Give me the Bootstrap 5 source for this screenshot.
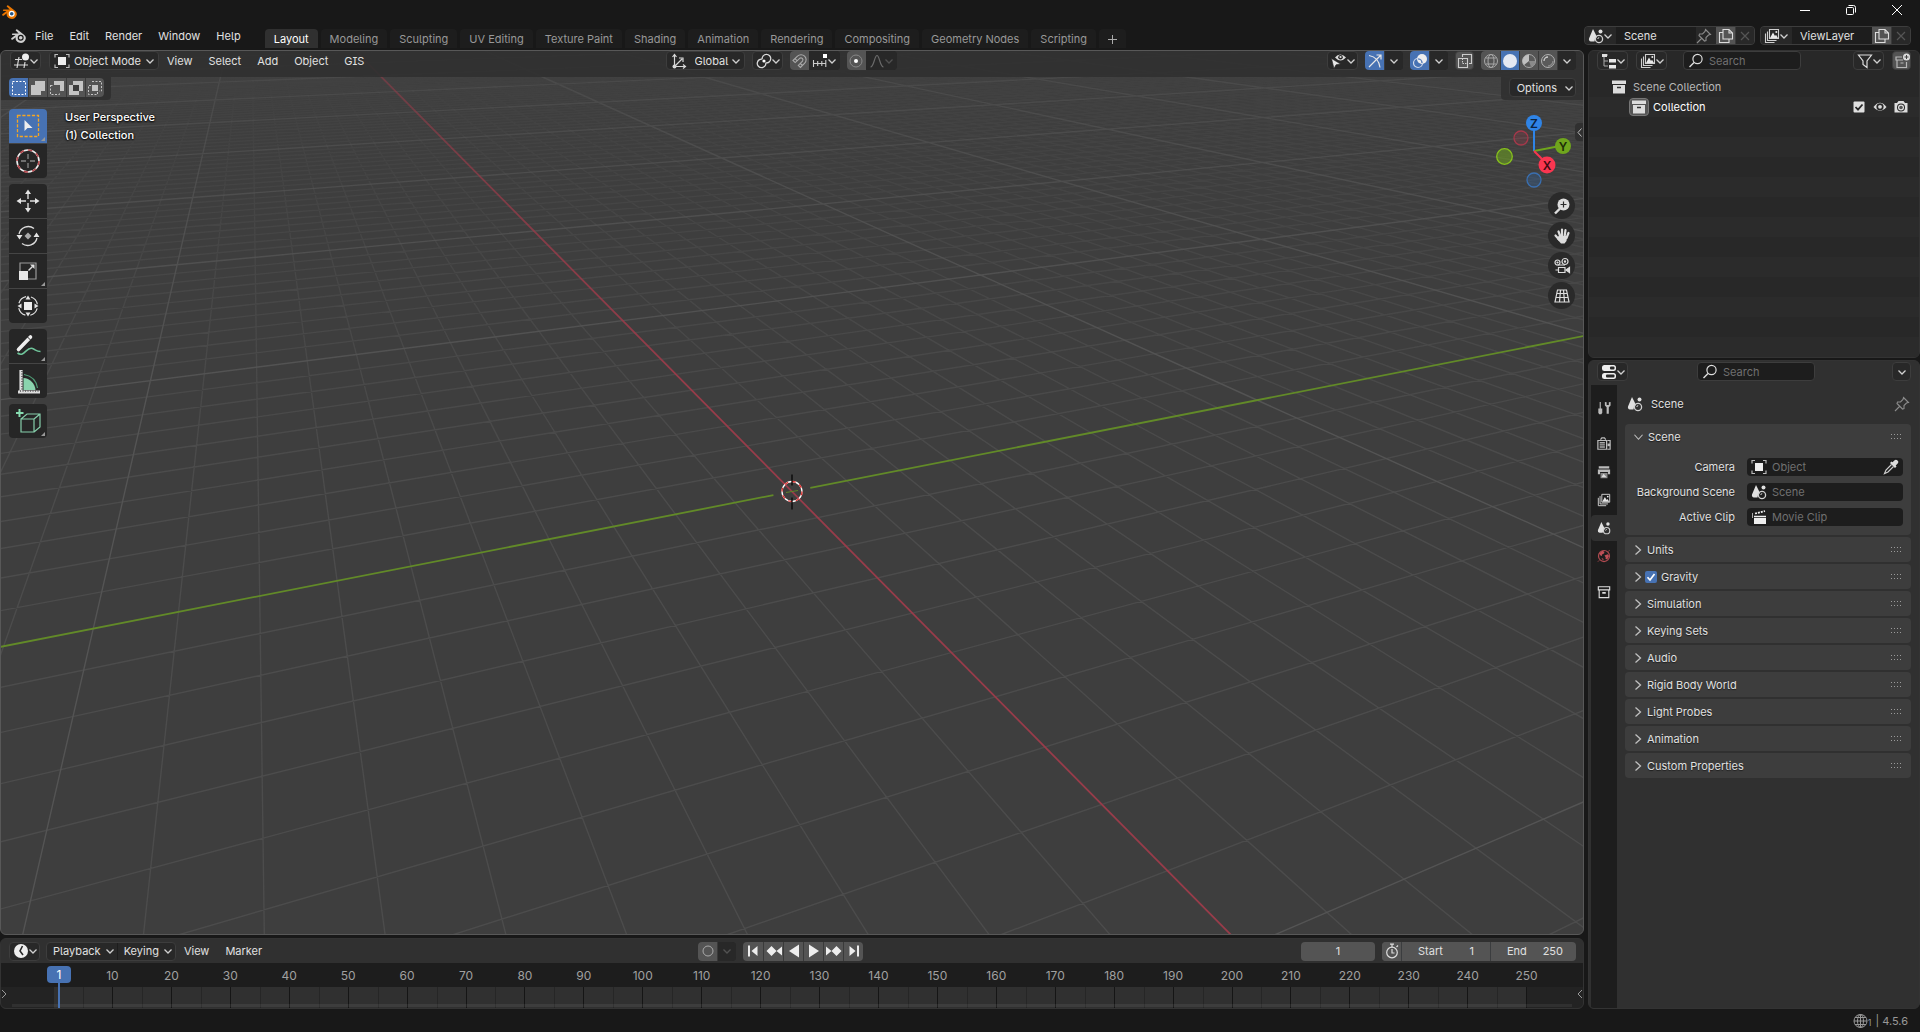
<!DOCTYPE html>
<html lang="en">
<head>
<meta charset="utf-8">
<meta name="viewport" content="width=device-width, initial-scale=1">
<title>Blender</title>
<link href="https://cdn.jsdelivr.net/npm/bootstrap@5.3.0/dist/css/bootstrap.min.css" rel="stylesheet">
<style>
:root{--ink:#e0e0e0;--dim:#989898;--blue:#4772b3;--btn:#545454;--menu:#282828;--line:#3d3d3d}
body{font:11px/18px Inter,"Liberation Sans",sans-serif;font-feature-settings:"cv05","cv08";background:#181818;color:var(--ink);overflow:hidden}
button,input,select{font:inherit;color:inherit;font-feature-settings:inherit}
button{border:0;padding:0;background:none}
.ic{width:16px;height:16px;flex:none;display:block;overflow:visible}
.chev{width:8px;height:8px;flex:none;overflow:visible;pointer-events:none}
.shade{text-shadow:0 1px 1px #0008}
.g5{gap:5px}
.g7{gap:7px}
.titlebar{height:24px}
.titlebar .winbtn{width:46px;height:20px;display:flex;align-items:center;justify-content:center}
.topbar{height:26px;padding-bottom:2px}
.mainmenu{padding:3px 0 0 3px}
.menubtn{padding:0 8px}
.wstabs{gap:3px;padding-left:16px}
.wstab{height:19px;padding:0 9px;color:var(--dim);background:#1d1d1d;border-radius:4px 4px 0 0}
.wstab.active{background:#303030;color:#fff}
.idblocks{padding:2px 9px 0 0;gap:5px}
.ctl{height:19px;display:flex;align-items:center;background:var(--menu);border:1px solid var(--line);border-radius:4px;overflow:hidden}
.ctl.seg{border:0}
.ctl select{appearance:none;background:none;border:0;outline:0;padding:0}
.sq{width:19px;height:100%;display:flex;align-items:center;justify-content:center;background:var(--btn)}
.ctl.sq{height:19px}
.sq.dark{background:var(--menu)}
.sq.on{background:var(--blue)}
.sq+.sq{border-left:1px solid #3a3a3a}
.typebtn{width:31px;padding:0 4px 0 3px;justify-content:space-between}
.modesel{width:72px}
.orientsel{width:37px}
.optbtn{padding:0 2px 0 7px}
.idname{background:#1d1d1d;border:0;outline:0;height:100%;min-width:0;width:80px}
.main{min-height:0}
.side{width:332px;flex:none}
.area{border:1px solid #333;border-radius:6px;overflow:hidden;min-height:0}
.view3d{border-color:#585858;background:#3e3e3e;position:relative}
.floor{position:absolute;inset:0;width:100%;height:100%}
.vhead{height:26px;padding:0 7px 0 9px;background:#303030e6;position:relative}
.vrow{position:relative}
.vtab{background:#303030e6;height:23px;padding:1px 7px 1px 8px}
.hgroup{flex:1 1 0}
.tools{position:relative;padding:9px 0 0 8px}
.tgroup{width:38px;border-radius:4px;overflow:hidden;background:#454545}
.tool{width:38px;height:34px;background:#262626;display:flex;align-items:center;justify-content:center;position:relative}
.tool.on{background:var(--blue)}
.tool.more::after{content:"";position:absolute;right:2px;bottom:2px;border:2px solid transparent;border-right-color:#999;border-bottom-color:#999}
.ovtext{padding:0 0 0 18px;margin-top:-1px;color:#fff;font-weight:500;text-shadow:0 0 2px #000,0 1px 2px #000}
.gizmo{position:absolute;right:0;top:58px;width:92px;height:84px}
.navs{position:absolute;right:8px;top:141px;gap:3px}
.navs button{width:27px;height:27px;border-radius:50%;background:#2a2a2a;display:flex;align-items:center;justify-content:center}
.sidetoggle{position:absolute;right:0;top:72px;width:8px;height:18px;background:#303030;border-radius:4px 0 0 4px}
.phead{height:25px;padding:0 8px}
.searchbox{width:118px;height:19px;background:#1d1d1d;border:1px solid var(--line);border-radius:4px;padding:0 4px;gap:5px}
.searchbox input,.field input{background:none;border:0;outline:0;min-width:0;padding:0;flex:1}
.searchbox input::placeholder,.field input::placeholder{color:#707070;opacity:1}
.outliner{height:308px;background:#282828;flex:none}
.tree{flex:1;margin-top:1px;background:repeating-linear-gradient(#282828 0 20px,#2b2b2b 20px 40px)}
.trow{height:20px;padding:0 10px 0 22px;gap:6px}
.trow.child{padding-left:40px;gap:4px}
.colbox{width:20px;height:18px;border-radius:4px;background:#555;border:1px solid #777;display:flex;align-items:center;justify-content:center}
.props{flex:1;background:#303030}
.props .phead{height:24px;padding-top:1px}
.ptabs{width:26px;background:#1d1d1d;margin-left:2px;padding-top:10px}
.ptabs .ic{width:14px;height:14px}
.ptabs button{height:26px;width:26px;margin-bottom:2px;display:flex;align-items:center;justify-content:center;border-radius:4px 0 0 4px}
.ptabs button.on{background:#303030}
.ptabs .sep{margin-bottom:10px}
.pbody{padding:10px 8px 0 8px}
.crumb{padding:0 1px 11px 2px;gap:8px}
.pnl{background:#3d3d3d;border-radius:4px;margin-bottom:2px}
.pnl.open{height:111px}
.phd{height:25px;padding:0 9px;width:100%;gap:5px}
.tickwrap{margin:0 -1px 0 -2px}
.tickbox{appearance:none;width:12px;height:12px;background:var(--blue);border-radius:2px;margin:0}
.fields{padding-top:5px}
.field{width:156px;height:18px;background:#1d1d1d;border-radius:4px;padding:0 4px;gap:5px}
.fieldrow{height:25px;padding-right:8px}
.timeline{height:71px;flex:none;background:#303030;position:relative}
.thead{height:24px;padding:0 7px 0 8px}
.ruler{height:24px;background:#1d1d1d;color:#a0a0a0;padding:2px 27px 0 82px;font-size:12px}
.ruler span,.track span{flex:1 1 0;text-align:center;width:0}
.track{height:22px;padding:0 27px 0 82px;background:linear-gradient(90deg,#232323 53px,#303030 53px calc(100% - 57px),#232323 0);position:relative}
.track span{border-left:1px solid #262626;background:linear-gradient(90deg,transparent calc(50% - 1px),#151515 0 50%,transparent 0)}
.track::after{content:"";position:absolute;left:11px;right:11px;bottom:2px;height:3px;background:#ffffff10}
.playhead{position:absolute;left:46px;top:27px;width:24px;height:17px;border-radius:4px;background:var(--blue);color:#fff;text-align:center;z-index:2;font-size:12px;line-height:17px}
.playhead::after{content:"";position:absolute;left:11px;top:17px;width:2px;height:25px;background:var(--blue)}
.popbtn{padding:0 3px 0 6px;display:flex;align-items:center;gap:5px}
.popbtn+.popbtn{border-left:1px solid #1d1d1d}
.num{height:19px;background:var(--btn);border:0;outline:0;border-radius:4px}
.numcur{width:74px}
.numst{width:89px}
.numend{width:86px;padding-right:13px}
.play{display:flex;height:19px;border-radius:4px;overflow:hidden}
.play .sq{width:20px}
.statusbar{height:23px;color:#989898;padding-right:12px}
.substat{font-size:9px;margin-left:-1px}
.num-in{background:none;border:0;outline:0;padding:0;text-align:right;width:24px}
.edgearrow{position:absolute;bottom:9px;width:6px;height:10px;overflow:visible}
</style>
</head>
<body class="d-flex flex-column vh-100">
<svg class="d-none" xmlns="http://www.w3.org/2000/svg">
<defs>
<symbol id="chev" viewBox="0 0 8 8"><path d="M0.5 2.5 4 6 7.5 2.5" fill="none" stroke="#d0d0d0" stroke-width="1.3"/></symbol>
<symbol id="editor3d" viewBox="0 0 16 16"><g fill="none" stroke="#d8d8d8" stroke-width="1.2"><path d="M1 6.5h7M0 12h14M5 4 3 15M11 9 10 15"/></g><circle cx="11.500" cy="4" r="3.500" fill="#eee"/></symbol>
<symbol id="obj" viewBox="0 0 16 16"><rect x="4" y="4" width="8" height="8" fill="#eee"/><path d="M1 4.500V1.500h3M12 1.500h3v3M15 11.500v3h-3M4 14.500H1v-3" fill="none" stroke="#bbb" stroke-width="1.200"/></symbol>
<symbol id="orient" viewBox="0 0 16 16"><path d="M3.500 2v11.500H14M3.500 13.500 11 6M1.500 4l2-2.500 2 2.500M12 11.500l2.500 2-2.500 2M8 5h4v4" fill="none" stroke="#d8d8d8" stroke-width="1.200"/><circle cx="3.500" cy="13.500" r="2" fill="#d8d8d8"/></symbol>
<symbol id="pivot" viewBox="0 0 16 16"><g fill="none" stroke="#d8d8d8" stroke-width="1.300"><path d="M6.500 6.200a4.300 4.300 0 1 0 3.300 3.600M9.500 9.800a4.300 4.300 0 1 0-3.300-3.600"/></g><circle cx="8" cy="8" r="1.600" fill="#fff"/></symbol>
<symbol id="magnet" viewBox="0 0 16 16"><path d="M2 7.500 6.500 3.200a5 5 0 0 1 7.200 7L9.500 14.500 7.300 12.400l4.200-4.300a2 2 0 0 0-2.800-2.800L4.200 9.600ZM4 5.700l2.100 2M9.300 10.500l2.100 2" fill="none" stroke="#aaa" stroke-width="1.100"/></symbol>
<symbol id="snapinc" viewBox="0 0 16 16"><path d="M1 10.500h13M1.500 7v7M5.700 8v5M9.800 8v5M13.800 7v7" fill="none" stroke="#ccc" stroke-width="1.100"/><rect x="11" y="1" width="4" height="4" fill="#fff"/></symbol>
<symbol id="propedit" viewBox="0 0 16 16"><circle cx="8" cy="8" r="6" fill="none" stroke="#888"/><circle cx="8" cy="8" r="2" fill="#fff"/></symbol>
<symbol id="falloff" viewBox="0 0 16 16"><path d="M1.500 14C5 14 5.500 2.500 8 2.500S11 14 14.500 14" fill="none" stroke="#6a6a6a" stroke-width="1.200"/></symbol>
<symbol id="visib" viewBox="0 0 16 16"><path d="M4 4.500Q9 -1.500 15 4.500Q9.500 10.500 4 4.500Z" fill="#ddd"/><circle cx="9.500" cy="4.300" r="2.300" fill="#282828"/><circle cx="9.500" cy="4" r="1.100" fill="#ddd"/><path d="M0.500 5.500l9 5.500-4.500.8-2 3.700Z" fill="#e8e8e8" stroke="#282828" stroke-width=".6"/></symbol>
<symbol id="giz" viewBox="0 0 16 16"><path d="M2 2.500c6 1 10 5 11 12M2 14 13.500 2.500M9.500 2h4.500v4.500" fill="none" stroke="#e8e8e8" stroke-width="1.200"/></symbol>
<symbol id="overlay" viewBox="0 0 16 16"><circle cx="10" cy="6" r="5" fill="#eee"/><circle cx="6" cy="10" r="4.500" fill="none" stroke="#cfd8ea" stroke-width="1.200"/><path d="M6 6a4 4 0 0 1 4 4" stroke="#4772b3" fill="none" stroke-width="1.200"/></symbol>
<symbol id="xray" viewBox="0 0 16 16"><path d="M5.500 4V1.500h9v9H12M1.500 5.500h9v9h-9Z" fill="none" stroke="#ccc" stroke-width="1.100"/><path d="M5.500 5.500v5h5" fill="none" stroke="#ccc" stroke-dasharray="1.500 1"/></symbol>
<symbol id="wire" viewBox="0 0 16 16"><g fill="none" stroke="#a8a8a8"><circle cx="8" cy="8" r="6.500"/><ellipse cx="8" cy="8" rx="3" ry="6.500"/><path d="M2.500 5h11M2.500 11h11"/></g></symbol>
<symbol id="solid" viewBox="0 0 16 16"><circle cx="8" cy="8" r="7" fill="#e4e8f2"/></symbol>
<symbol id="matp" viewBox="0 0 16 16"><circle cx="8" cy="8" r="6.500" fill="#5a5a5a" stroke="#a8a8a8"/><path d="M8 1.500V8L3 12A6.500 6.500 0 0 1 8 1.500" fill="#c0c0c0"/><path d="M8 8h6.500A6.500 6.500 0 0 1 10 14Z" fill="#8a8a8a"/></symbol>
<symbol id="rend" viewBox="0 0 16 16"><circle cx="8" cy="8" r="6.500" fill="#5a5a5a" stroke="#b0b0b0"/><path d="M4 8a4 4 0 0 1 4-4" fill="none" stroke="#ccc" stroke-width="1.300"/><path d="M13 8a5 5 0 0 1-5 5" fill="none" stroke="#888" stroke-width="1.500"/></symbol>
<symbol id="scene" viewBox="0 0 16 16"><path d="M5 1 9 9a5 5 0 0 0-2.500 4.500H3A2.500 2.500 0 0 1 1 10.500Z" fill="#e0e0e0"/><circle cx="11" cy="11" r="3.600" fill="none" stroke="#d0d0d0" stroke-width="1.300"/><path d="M9.800 11a1.400 1.400 0 0 1 1.400-1.400" fill="none" stroke="#d0d0d0"/><circle cx="12.500" cy="3.500" r="2" fill="#e0e0e0"/></symbol>
<symbol id="layers" viewBox="0 0 16 16"><path d="M5.500 1.500h9v9h-9ZM3.500 3.500v9h9M1.500 5.500v9h9" fill="none" stroke="#d0d0d0" stroke-width="1.100"/><path d="M6 10l3-5.500 2 3.500 1-1.200 2 3.200Z" fill="#e8e8e8"/><circle cx="12.300" cy="4" r="1" fill="#e8e8e8"/></symbol>
<symbol id="copy" viewBox="0 0 16 16"><path d="M5 1.500h6l3.500 3.500v6H5ZM11 1.500V5h3.500M5 4.500H1.500v10H11V11.500" fill="none" stroke="#ddd" stroke-width="1.100"/></symbol>
<symbol id="xx" viewBox="0 0 16 16"><path d="M4 4l8 8M12 4l-8 8" stroke="#555" stroke-width="1.200"/></symbol>
<symbol id="pin" viewBox="0 0 16 16"><path d="M9.500 1.500 14.500 6.500 12.500 7 10 9.500 10 12.500 8.500 13 3 7.500 3.500 6h3L9 3.500ZM5.500 10.500 1 15" fill="none" stroke="#8a8a8a" stroke-width="1.100"/></symbol>
<symbol id="outl" viewBox="0 0 16 16"><path d="M1 2h6M3 3v10h4M3 8h4" fill="none" stroke="#aaa"/><rect x="1" y="1" width="5" height="3" fill="#ddd"/><rect x="8" y="6" width="7" height="3.500" fill="#e8e8e8"/><rect x="8" y="12" width="7" height="3.500" fill="#e8e8e8"/></symbol>
<symbol id="mag" viewBox="0 0 16 16"><circle cx="9.500" cy="6" r="4.600" fill="none" stroke="#ddd" stroke-width="1.200"/><path d="M6 9.500 1.500 14" stroke="#ddd" stroke-width="1.400"/></symbol>
<symbol id="filt" viewBox="0 0 16 16"><path d="M1.500 2h13L10 8v6.500l-4-3V8Z" fill="none" stroke="#ddd" stroke-width="1.200"/></symbol>
<symbol id="newcol" viewBox="0 0 16 16"><path d="M8 4H2v3h7M3 7v7.500h9.500V9M6.500 10h3" fill="none" stroke="#b8b8b8" stroke-width="1.200"/><circle cx="12.500" cy="4" r="3.500" fill="#ddd"/><path d="M12.500 2v4M10.500 4h4" stroke="#444"/></symbol>
<symbol id="coll" viewBox="0 0 16 16"><path d="M1 1.500h14v3.500H1ZM2 6h12v8.500H2Z" fill="#dcdcdc"/><path d="M6 8.500h4" stroke="#333" stroke-width="1.600"/></symbol>
<symbol id="colo" viewBox="0 0 16 16"><path d="M1.500 2h13v3.500h-13ZM2.500 5.500v9h11v-9" fill="none" stroke="#ddd" stroke-width="1.300"/><path d="M6 9h4" stroke="#ddd" stroke-width="2"/></symbol>
<symbol id="check" viewBox="0 0 16 16"><rect x="2.500" y="2.500" width="11" height="11" rx="1" fill="#e0e0e0"/><path d="M4.500 8l2.500 2.700L11.500 5.500" fill="none" stroke="#282828" stroke-width="1.800"/></symbol>
<symbol id="eye" viewBox="0 0 16 16"><path d="M1.500 8Q8 -.5 14.500 8Q8 15.500 1.500 8Z" fill="#dcdcdc"/><circle cx="8" cy="7.800" r="3.600" fill="#282828"/><circle cx="8" cy="7.800" r="1.900" fill="#dcdcdc"/></symbol>
<symbol id="cam" viewBox="0 0 16 16"><path d="M1.500 4h2.500l1.500-2h5L12 4h2.500v9.500h-13Z" fill="#dcdcdc"/><circle cx="8" cy="8.500" r="4" fill="#282828"/><circle cx="8" cy="8.500" r="3" fill="#dcdcdc"/><circle cx="8" cy="8.500" r="1.800" fill="#555"/></symbol>
<symbol id="propic" viewBox="0 0 16 16"><rect x="1" y="1" width="14" height="6" rx="2.500" fill="#eee"/><rect x="1" y="9" width="14" height="6" rx="2.500" fill="#eee"/><rect x="9" y="2.500" width="4.500" height="3" rx="1" fill="#282828"/><rect x="5" y="10.500" width="8.500" height="3" rx="1" fill="#282828"/></symbol>
<symbol id="tool" viewBox="0 0 16 16"><path d="M3.700 1v8" stroke="#bbb" stroke-width="1.300"/><path d="M1.500 8.500h4.500v5l-1 1.500H2.500l-1-1.500Z" fill="#bbb"/><path d="M9 1v4l2 2v7.500h2.500V7l2-2V1l-2 .5v3h-2.500v-3Z" fill="#bbb"/></symbol>
<symbol id="rcam" viewBox="0 0 16 16"><path d="M4 3l1.500-2h3L10 3M1 4h10v10H1ZM12 4h3v10h-3" fill="none" stroke="#bbb" stroke-width="1.400"/><path d="M3 6.500h6M3 9h6M3 11.500h6" stroke="#aaa" stroke-width="1.600"/><rect x="12" y="7.500" width="3" height="3" fill="#bbb"/></symbol>
<symbol id="printer" viewBox="0 0 16 16"><path d="M2 1.500h12v2.500H2ZM1 5h14v5.500h-2.500V8h-9v2.500H1Z" fill="#bbb"/><path d="M4 9h8v6H4Z" fill="#888"/><path d="M5 14l2.500-4 3.500 4Z" fill="#ddd"/></symbol>
<symbol id="world" viewBox="0 0 16 16"><circle cx="8" cy="8" r="6.300" fill="none" stroke="#b04a50" stroke-width="1.400"/><path d="M2.500 5l3.500-3 2.500 1-.5 2-2 1-.5 2-1.500-.5ZM8.500 7.500l4-1.500 1.200 2-2 4-2-1 .2-1.500ZM5 10l2.500 1.500-.5 2Z" fill="#c05058"/><path d="M1 14.500l1.500-1.500M13 2.500l1.500-1" stroke="#b04a50"/></symbol>
<symbol id="clip" viewBox="0 0 16 16"><rect x="3" y="9" width="12" height="6" fill="#eee"/><path d="M3 7.500h12" stroke="#eee" stroke-width="1.500"/><path d="M4 4.500 14 2" stroke="#eee" stroke-width="1.800" stroke-dasharray="2 1"/><path d="M1.500 4v5" stroke="#aaa"/></symbol>
<symbol id="drop" viewBox="0 0 16 16"><path d="M14.500 1.500a2.200 2.200 0 0 0-3.200 0L9.500 3.300 8.500 2.500 7 4l5 5 1.500-1.500-.8-1 1.800-1.800a2.200 2.200 0 0 0 0-3.200" fill="#ddd"/><path d="M8.500 5.500 3 11l-1.500 3.500L5 13l5.500-5.500" fill="none" stroke="#ccc" stroke-width="1.200"/></symbol>
<symbol id="right" viewBox="0 0 8 10"><path d="M1.500 0.500 6.500 5l-5 4.500" fill="none" stroke="#c0c0c0" stroke-width="1.300"/></symbol>
<symbol id="down" viewBox="0 0 10 8"><path d="M.5 1.500 5 6.500l4.500-5" fill="none" stroke="#c0c0c0" stroke-width="1.200"/></symbol>
<symbol id="grip" viewBox="0 0 11 5"><path d="M0 .5h11M0 4.500h11" stroke="#9a9a9a" stroke-dasharray="1 2"/></symbol>
<symbol id="blogo" viewBox="0 0 16 14"><path d="M6.300.6 13 5.800a5 4.600 0 1 1-8.200 2.400L1.600 10.700a1 1 0 0 1-1.300-1.400L4.500 6H1.700a.8.800 0 0 1 0-1.600h6L5.200 2.100A.9.900 0 0 1 6.300.6Z" fill="var(--c1)"/><circle cx="9.700" cy="8.700" r="3" fill="var(--c2)"/><circle cx="9.700" cy="8.700" r="1.800" fill="var(--c3)"/></symbol>
<symbol id="tclock" viewBox="0 0 16 16"><circle cx="8" cy="8" r="7" fill="#eee"/><path d="M9.500 3 7 8l3 4" fill="none" stroke="#282828" stroke-width="1.600"/></symbol>
<symbol id="watch" viewBox="0 0 16 16"><circle cx="8" cy="9.500" r="5.300" fill="none" stroke="#ddd" stroke-width="1.200"/><path d="M6 1.200h4M8 1.200v3M8 6v4h2.500M12.500 4l1.500-1.500" fill="none" stroke="#ddd" stroke-width="1.200"/></symbol>
<symbol id="globe" viewBox="0 0 16 16"><g fill="none" stroke="#989898"><circle cx="7.500" cy="8" r="6.500"/><ellipse cx="7.500" cy="8" rx="3" ry="6.500"/><path d="M1 8h13M2 4.500h11M2 11.500h11M7.500 1.500v13"/></g></symbol>
</defs>
</svg>

<header>
  <div class="titlebar d-flex align-items-start justify-content-between">
    <svg class="ic mt-1" style="--c1:#ea7600;--c2:#fff;--c3:#265787;margin-left:2px"><use href="#blogo"/></svg>
    <div class="d-flex">
      <button class="winbtn" aria-label="Minimize"><svg width="10" height="10"><path d="M0 5.500h10" stroke="#fff"/></svg></button>
      <button class="winbtn" aria-label="Restore"><svg width="10" height="10" fill="none" stroke="#fff"><rect x=".5" y="2.500" width="7" height="7" rx="1"/><path d="M2.500.5h5a2 2 0 0 1 2 2v5"/></svg></button>
      <button class="winbtn" aria-label="Close"><svg width="10" height="10" stroke="#fff"><path d="M0 0l10 10M10 0 0 10"/></svg></button>
    </div>
  </div>
  <div class="topbar d-flex align-items-end">
    <nav class="mainmenu d-flex align-items-center align-self-start" style="--c1:#d0d0d0;--c2:#181818;--c3:#d0d0d0">
      <svg class="ic ms-2" aria-hidden="true"><use href="#blogo"/></svg>
      <button class="menubtn">File</button><button class="menubtn">Edit</button><button class="menubtn">Render</button><button class="menubtn">Window</button><button class="menubtn">Help</button>
    </nav>
    <nav id="tabs" class="wstabs d-flex"></nav>
    <div class="idblocks d-flex ms-auto align-self-start">
      <div class="ctl"><button class="ctl border-0 typebtn" aria-label="Browse scene"><svg class="ic"><use href="#scene"/></svg><svg class="chev"><use href="#chev"/></svg></button>
        <input class="idname ps-2" value="Scene" aria-label="Scene name"><svg class="ic me-1"><use href="#pin"/></svg>
        <button class="sq" aria-label="New scene"><svg class="ic"><use href="#copy"/></svg></button><button class="sq dark" aria-label="Delete scene"><svg class="ic"><use href="#xx"/></svg></button></div>
      <div class="ctl"><button class="ctl border-0 typebtn" aria-label="Browse view layer"><svg class="ic"><use href="#layers"/></svg><svg class="chev"><use href="#chev"/></svg></button>
        <input class="idname ps-2" value="ViewLayer" aria-label="View layer name">
        <button class="sq" aria-label="New view layer"><svg class="ic"><use href="#copy"/></svg></button><button class="sq dark" aria-label="Delete view layer"><svg class="ic"><use href="#xx"/></svg></button></div>
    </div>
  </div>
</header>

<main class="main flex-grow-1 d-flex gap-1">
  <div class="flex-grow-1 d-flex flex-column" style="gap:3px;min-width:0">
    <section class="area view3d flex-grow-1">
      <svg class="floor" id="floor" viewBox="0 0 1584 884" preserveAspectRatio="xMidYMid slice" aria-label="3D viewport"></svg>
      <div class="vhead d-flex align-items-start">
        <div class="hgroup d-flex align-items-center">
          <button class="ctl typebtn me-2" aria-label="Editor type"><svg class="ic"><use href="#editor3d"/></svg><svg class="chev"><use href="#chev"/></svg></button>
          <label class="ctl px-1"><svg class="ic me-1"><use href="#obj"/></svg><select aria-label="Mode" class="modesel"><option>Object Mode</option></select><svg class="chev"><use href="#chev"/></svg></label>
          <button class="menubtn">View</button><button class="menubtn">Select</button><button class="menubtn">Add</button><button class="menubtn">Object</button><button class="menubtn">GIS</button>
        </div>
        <div class="d-flex align-items-center g7 me-4">
          <label class="ctl px-1"><svg class="ic me-2"><use href="#orient"/></svg><select aria-label="Orientation" class="orientsel"><option>Global</option></select><svg class="chev"><use href="#chev"/></svg></label>
          <button class="ctl typebtn" aria-label="Pivot"><svg class="ic"><use href="#pivot"/></svg><svg class="chev"><use href="#chev"/></svg></button>
          <div class="ctl seg"><button class="sq" aria-label="Snap"><svg class="ic"><use href="#magnet"/></svg></button><button class="ctl border-0 typebtn" aria-label="Snap to"><svg class="ic"><use href="#snapinc"/></svg><svg class="chev"><use href="#chev"/></svg></button></div>
          <div class="ctl seg"><button class="sq" aria-label="Proportional"><svg class="ic"><use href="#propedit"/></svg></button><button class="ctl border-0 typebtn" aria-label="Falloff"><svg class="ic"><use href="#falloff"/></svg><svg class="chev opacity-25"><use href="#chev"/></svg></button></div>
        </div>
        <div class="hgroup d-flex align-items-center justify-content-end g7">
          <button class="ctl typebtn" aria-label="Visibility"><svg class="ic"><use href="#visib"/></svg><svg class="chev"><use href="#chev"/></svg></button>
          <div class="ctl seg"><button class="sq on" aria-label="Gizmos"><svg class="ic"><use href="#giz"/></svg></button><button class="sq dark" aria-label="Gizmo menu"><svg class="chev"><use href="#chev"/></svg></button></div>
          <div class="ctl seg"><button class="sq on" aria-label="Overlays"><svg class="ic"><use href="#overlay"/></svg></button><button class="sq dark" aria-label="Overlay menu"><svg class="chev"><use href="#chev"/></svg></button></div>
          <button class="ctl sq" aria-label="X-ray"><svg class="ic"><use href="#xray"/></svg></button>
          <div class="ctl seg"><button class="sq" aria-label="Wireframe"><svg class="ic"><use href="#wire"/></svg></button><button class="sq on" aria-label="Solid"><svg class="ic"><use href="#solid"/></svg></button><button class="sq" aria-label="Material"><svg class="ic"><use href="#matp"/></svg></button><button class="sq" aria-label="Rendered"><svg class="ic"><use href="#rend"/></svg></button><button class="sq dark" aria-label="Shading menu"><svg class="chev"><use href="#chev"/></svg></button></div>
        </div>
      </div>
      <div class="vrow d-flex justify-content-between">
        <div class="vtab" style="border-bottom-right-radius:4px"><div class="ctl seg" id="selmodes"></div></div>
        <div class="vtab" style="border-bottom-left-radius:4px"><button class="ctl optbtn gap-2">Options<svg class="chev"><use href="#chev"/></svg></button></div>
      </div>
      <div class="tools d-flex align-items-start">
        <div class="d-flex flex-column" id="toolcol" style="gap:6px"></div>
        <div class="ovtext"><div>User Perspective</div><div>(1) Collection</div></div>
      </div>
      <svg class="gizmo" viewBox="-9 0 92 84" font-family="Inter" font-size="12" font-weight="600" text-anchor="middle">
        <g fill="none" stroke-width="2"><path d="M34 42V16" stroke="#2f84e6"/><path d="M34 42 60 37" stroke="#6fa51d"/><path d="M34 42 46 54" stroke="#f93650"/></g>
        <circle cx="21" cy="29" r="7" fill="#f9365022" stroke="#a6384a" stroke-width="1.300"/><circle cx="4.500" cy="47.500" r="7.800" fill="#6fa51d88" stroke="#86c11c" stroke-width="1.300"/><circle cx="34" cy="71" r="7" fill="#2f84e633" stroke="#3a6fb0" stroke-width="1.300"/>
        <circle cx="34" cy="14" r="8" fill="#2f84e6"/><circle cx="63" cy="37" r="8" fill="#6fa51d"/><circle cx="47" cy="56" r="8.500" fill="#f93650"/>
        <text x="34" y="18.500" fill="#0c2340">Z</text><text x="63" y="41.500" fill="#1d2c08">Y</text><text x="47" y="60.500" fill="#400a12">X</text>
      </svg>
      <div class="navs d-flex flex-column">
        <button aria-label="Zoom"><svg class="ic"><circle cx="9.500" cy="6.500" r="6" fill="#ddd"/><path d="M9.500 3.500v6M6.500 6.500h6" stroke="#2a2a2a" stroke-width="1.200"/><path d="M6 10.500 1 15.500" stroke="#ddd" stroke-width="2.400"/></svg></button>
        <button aria-label="Pan"><svg class="ic"><g stroke="#ddd" stroke-width="2.200" stroke-linecap="round"><path d="M4.500 3.500 6.500 9M8 1.500v7M11.500 2.200 10.500 9M14.500 5l-2 5M1.500 7.500 5 11.500"/></g><path d="M4.500 8h8.500l-.5 5-2 2.500h-3.500L3 11Z" fill="#ddd"/></svg></button>
        <button aria-label="Camera view"><svg class="ic" fill="none" stroke="#ddd" stroke-width="1.200"><circle cx="11" cy="3.500" r="3"/><circle cx="3.500" cy="4.500" r="2.500"/><path d="M3.500 7h7.500M4.500 9.500h6.500v5H4.500ZM1.500 12h3"/><path d="M15.500 9.500v5L12 12Z" fill="#ddd"/><circle cx="11" cy="3.500" r=".6"/><circle cx="3.500" cy="4.500" r=".5"/></svg></button>
        <button aria-label="Perspective"><svg class="ic" fill="none" stroke="#ddd" stroke-width="1.200"><path d="M3.500 2h9l2.500 12H1ZM2.800 5.500h10.400M2 9.500h12M6.500 2 5.500 14M9.500 2l1 12"/></svg></button>
      </div>
      <button class="sidetoggle" aria-label="Show sidebar"><svg class="d-block mx-auto" width="5" height="9"><path d="M4.500.5 1 4.500l3.500 4" fill="none" stroke="#bbb"/></svg></button>
    </section>

    <section class="area timeline">
      <div class="thead d-flex align-items-center">
        <div class="hgroup d-flex align-items-center">
          <button class="ctl typebtn" aria-label="Editor type"><svg class="ic"><use href="#tclock"/></svg><svg class="chev"><use href="#chev"/></svg></button>
          <div class="ctl" style="margin-left:6px"><button class="popbtn">Playback<svg class="chev"><use href="#chev"/></svg></button><button class="popbtn">Keying<svg class="chev"><use href="#chev"/></svg></button></div>
          <button class="menubtn">View</button><button class="menubtn">Marker</button>
        </div>
        <div class="d-flex align-items-center g7 me-4">
          <div class="ctl seg"><button class="sq" aria-label="Auto keying"><svg class="ic"><circle cx="8" cy="8" r="5" fill="none" stroke="#aaa"/></svg></button><button class="sq dark" aria-label="Keying menu"><svg class="chev opacity-25"><use href="#chev"/></svg></button></div>
          <div class="play" id="play"></div>
        </div>
        <div class="hgroup d-flex justify-content-end g7">
          <input class="num numcur text-center" value="1" aria-label="Current frame">
          <div class="num d-flex overflow-hidden">
            <button class="sq" aria-label="Use preview range"><svg class="ic"><use href="#watch"/></svg></button>
            <label class="numst d-flex justify-content-between px-3 border-start border-dark border-opacity-50">Start<input class="num-in" value="1"></label>
            <label class="numend d-flex justify-content-between ps-3 border-start border-dark border-opacity-50">End<input class="num-in" value="250"></label>
          </div>
        </div>
      </div>
      <div class="ruler d-flex align-items-center" id="ruler"></div>
      <div class="track d-flex" id="track"></div>
      <div class="playhead">1</div>
      <svg class="edgearrow start-0"><path d="M1 1l4 4-4 4" fill="none" stroke="#999"/></svg>
      <svg class="edgearrow end-0"><path d="M5 1 1 5l4 4" fill="none" stroke="#999"/></svg>
    </section>
  </div>

  <aside class="side d-flex flex-column" style="gap:2px">
    <section class="area outliner d-flex flex-column">
      <div class="phead d-flex align-items-start">
        <button class="ctl typebtn" aria-label="Editor type"><svg class="ic"><use href="#outl"/></svg><svg class="chev"><use href="#chev"/></svg></button>
        <button class="ctl typebtn ms-2" aria-label="Display mode"><svg class="ic"><use href="#layers"/></svg><svg class="chev"><use href="#chev"/></svg></button>
        <label class="searchbox d-flex align-items-center ms-3 me-auto"><svg class="ic"><use href="#mag"/></svg><input placeholder="Search" aria-label="Search outliner"></label>
        <button class="ctl typebtn" aria-label="Filter"><svg class="ic"><use href="#filt"/></svg><svg class="chev"><use href="#chev"/></svg></button>
        <button class="ctl sq ms-2" aria-label="New collection"><svg class="ic"><use href="#newcol"/></svg></button>
      </div>
      <div class="tree">
        <div class="trow d-flex align-items-center"><svg class="ic"><use href="#coll"/></svg><span style="color:#b8b8b8">Scene Collection</span></div>
        <div class="trow child d-flex align-items-center"><span class="colbox"><svg class="ic"><use href="#coll"/></svg></span><span class="text-white">Collection</span>
          <span class="d-flex ms-auto g5"><svg class="ic"><use href="#check"/></svg><svg class="ic"><use href="#eye"/></svg><svg class="ic"><use href="#cam"/></svg></span></div>
      </div>
    </section>
    <section class="area props d-flex flex-column">
      <div class="phead d-flex align-items-start">
        <button class="ctl typebtn" aria-label="Editor type"><svg class="ic"><use href="#propic"/></svg><svg class="chev"><use href="#chev"/></svg></button>
        <label class="searchbox d-flex align-items-center mx-auto"><svg class="ic"><use href="#mag"/></svg><input placeholder="Search" aria-label="Search properties"></label>
        <button class="ctl sq dark ms-2" aria-label="Options"><svg class="chev"><use href="#chev"/></svg></button>
      </div>
      <div class="d-flex flex-grow-1">
        <div class="ptabs" id="ptabs"></div>
        <div class="pbody flex-grow-1">
          <div class="crumb d-flex align-items-center"><svg class="ic"><use href="#scene"/></svg><span class="shade">Scene</span><svg class="ic ms-auto"><use href="#pin"/></svg></div>
          <div class="pnl open">
            <button class="phd d-flex align-items-center"><svg width="9" height="8"><use href="#down"/></svg><span class="shade">Scene</span><svg class="ms-auto" width="11" height="5"><use href="#grip"/></svg></button>
            <div class="fields" id="fields"></div>
          </div>
          <div id="panels"></div>
        </div>
      </div>
    </section>
  </aside>
</main>
<footer class="statusbar d-flex align-items-center justify-content-end"><svg class="ic"><use href="#globe"/></svg><span class="substat align-self-end">1</span><span class="ms-1">| 4.5.6</span></footer>

<script>
const $=id=>document.getElementById(id);
const use=(n,c='ic')=>`<svg class="${c}"><use href="#${n}"/></svg>`;
// workspace tabs
$('tabs').innerHTML=['Layout','Modeling','Sculpting','UV Editing','Texture Paint','Shading','Animation','Rendering','Compositing','Geometry Nodes','Scripting','+']
 .map((t,i)=>`<button class="wstab${i?'':' active'}">${t=='+'?'<svg width="9" height="9"><path d="M4.5 0v9M0 4.500h9" stroke="#aaa"/></svg>':t}</button>`).join('');
// selection modes
const sm=['<rect x="1.500" y="1.500" width="13" height="13" fill="none" stroke="#fff" stroke-dasharray="2 1.500"/>',
'<path d="M5 1h10v10h-4v4H1V5h4Z" fill="#c4c4c4"/>',
'<path d="M5 1h10v10h-4V5H5Z" fill="#c4c4c4"/><path d="M1.500 5v9.500h9V12M1.500 5.500h3" fill="none" stroke="#c4c4c4" stroke-dasharray="2 1.500"/>',
'<path d="M5 1h10v10h-4v4H1V5h4Z" fill="#c4c4c4"/><rect x="5" y="5" width="6" height="6" fill="#3d3d3d"/>',
'<rect x="5" y="5" width="6" height="6" fill="#c4c4c4"/><path d="M5 1.500h9.500v9.500H12M4 5.500H1.500v9h9V12" fill="none" stroke="#c4c4c4" stroke-dasharray="2 1.500"/>'];
$('selmodes').innerHTML=sm.map((s,i)=>`<button class="sq${i?'':' on'}" aria-label="Select mode"><svg class="ic">${s}</svg></button>`).join('');
// toolbar, 24 unit icons
const T={
select:'<rect x="1.500" y="1.500" width="21" height="21" fill="none" stroke="#f5a623" stroke-width="1.300" stroke-dasharray="3.200 1.600"/><path d="M8.500 6v11l3-3h5Z" fill="#eee"/>',
cursor:'<circle cx="12" cy="12" r="11" fill="none" stroke="#eee" stroke-width="1.600"/><circle cx="12" cy="12" r="11" fill="none" stroke="#b5484e" stroke-width="1.600" stroke-dasharray="4.300 4.300"/><path d="M12 5v5M12 14v5M5 12h5M14 12h5" stroke="#888" stroke-width="1.300"/>',
move:'<path d="M12 5v5M12 14v5M5 12h5M14 12h5" stroke="#ddd" stroke-width="1.400"/><path d="M12 .5l3 4.500H9ZM12 23.500l3-4.500H9ZM.5 12 5 9v6ZM23.500 12 19 9v6Z" fill="#e4e4e4"/>',
rotate:'<path d="M3 10a9.500 9.500 0 0 1 15-5.500M21 14a9.500 9.500 0 0 1-15 5.500" fill="none" stroke="#ddd" stroke-width="1.300"/><path d="M12 8.500l3.500 3.500-3.500 3.500L8.500 12Z" fill="#aaa"/><path d="M.5 11h6L3.500 15.500ZM17.500 13h6L20.500 8.500Z" fill="#e4e4e4"/>',
scale:'<path d="M4 12V4h16v16h-8" fill="none" stroke="#999" stroke-width="1.200"/><rect x="3" y="12" width="9" height="9" fill="#e8e8e8"/><path d="M12.500 11.500l4-4" stroke="#ddd" stroke-width="1.400"/><path d="M18.500 5.500v4.500L14 5.500Z" fill="#e4e4e4"/>',
transform:'<circle cx="12" cy="12" r="9.500" fill="none" stroke="#ddd" stroke-width="1.200" stroke-dasharray="10 5" stroke-dashoffset="-2.500"/><rect x="8" y="8" width="8" height="8" fill="#eee"/><path d="M12 1.500l2.500 4h-5ZM12 22.500l2.500-4h-5ZM1.500 12l4-2.500v5ZM22.500 12l-4-2.500v5Z" fill="#e4e4e4"/>',
annotate:'<path d="M2.500 15.500 14.500 3" stroke="#eee" stroke-width="3.600" stroke-linecap="round"/><path d="M1.500 19c7 5 9-7 15-4.500 3 1.200 4 3 8 3" fill="none" stroke="#6fc49a" stroke-width="1.600"/><path d="M11.500 3l3 3" stroke="#262626"/>',
measure:'<path d="M7.500 9a13 13 0 0 1 12 12h-12Z" fill="#8ad4ae"/><path d="M8 5.500C16 7 20.500 12 21.500 19" fill="none" stroke="#4e9a74" stroke-width="1.200"/><path d="M5 1v22M2 23h22" fill="none" stroke="#ddd" stroke-width="3.200"/><path d="M6 2v19M4 22h20" stroke="#555" stroke-width="1.600" stroke-dasharray="1 1.500"/>',
addcube:'<path d="M5 10h13v13H5ZM5 10l6-5h13v13l-6 5M18 10l6-5" fill="none" stroke="#86cfab" stroke-width="1.200"/><path d="M3.500 0v8M0 4h7.500" stroke="#86dcb0" stroke-width="2"/>'};
$('toolcol').innerHTML=[['select','cursor'],['move','rotate','scale','transform'],['annotate','measure'],['addcube']].map(g=>
 `<div class="tgroup d-flex flex-column" style="gap:1px">${g.map(n=>`<button aria-label="${n}" class="tool${n=='select'?' on':''}${['select','scale','annotate','addcube'].includes(n)?' more':''}"><svg width="24" height="24" overflow="visible">${T[n]}</svg></button>`).join('')}</div>`).join('');
// transport
const P=['M3 2.500h2v11H3ZM12.500 3v10L6.500 8Z','M5.500 3l5 5-5 5-5-5ZM16 3.500v9L10.500 8Z','M13 1.500v13L3 8Z','M3 1.500v13L13 8Z','M0 3.500v9L5.500 8ZM10.500 3l5 5-5 5-5-5Z','M11 2.500h2v11h-2ZM3.500 3v10L9.500 8Z'];
$('play').innerHTML=P.map(d=>`<button class="sq" aria-label="Transport"><svg class="ic"><path d="${d}" fill="#eee"/></svg></button>`).join('');
// timeline
let r='',k='';for(let f=10;f<=250;f+=10){r+=`<span>${f}</span>`;k+='<span></span>'}
$('ruler').innerHTML=r;$('track').innerHTML=k;
// properties
$('ptabs').innerHTML=[['tool',1],['rcam'],['printer'],['layers'],['scene'],['world',1],['colo']].map(([n,s])=>`<button aria-label="${n}" class="${s?'sep':''} ${n=='scene'?'on':''}">${use(n)}</button>`).join('');
$('fields').innerHTML=[['Camera','obj','Object'],['Background Scene','scene','Scene'],['Active Clip','clip','Movie Clip']].map(([l,i,p],n)=>
 `<div class="fieldrow d-flex align-items-center justify-content-end"><label class="shade me-2 pe-1" for="f${n}">${l}</label><div class="field d-flex align-items-center">${use(i)}<input id="f${n}" placeholder="${p}">${n?'':use('drop')}</div></div>`).join('');
$('panels').innerHTML=['Units','Gravity','Simulation','Keying Sets','Audio','Rigid Body World','Light Probes','Animation','Custom Properties'].map(t=>
 `<div class="pnl phd d-flex align-items-center"><svg width="8" height="10"><use href="#right"/></svg>${t=='Gravity'?'<span class="tickwrap position-relative d-flex"><input type="checkbox" checked id="grav" class="tickbox"><svg class="position-absolute start-0 top-0 pe-none" width="12" height="12"><path d="M2.500 6.200 5 9l4.500-6" fill="none" stroke="#fff" stroke-width="1.700"/></svg></span><label for="grav" class="shade">Gravity</label>':`<span class="shade">${t}</span>`}<svg class="ms-auto" width="11" height="5"><use href="#grip"/></svg></div>`).join('');
// perspective floor grid: 50 mm lens, 26.4 degrees above the ground, 18 m away
const F=1100,D=18,c=.4035,s=.915,se=.4453,ce=.8954,CX=792,CY=441;
const cam=(x,y)=>[c*x+s*y,se*(s*x-c*y),D-ce*(s*x-c*y)];
function seg(x1,y1,x2,y2){let a=cam(x1,y1),b=cam(x2,y2);const n=1;
 if(a[2]<n&&b[2]<n)return'';
 const cut=(p,q)=>{const t=(n-p[2])/(q[2]-p[2]);return p.map((v,i)=>v+t*(q[i]-v))};
 if(a[2]<n)a=cut(a,b);else if(b[2]<n)b=cut(b,a);
 const pr=p=>(CX+F*p[0]/p[2]).toFixed(1)+' '+(CY+F*p[1]/p[2]).toFixed(1);
 return'M'+pr(a)+'L'+pr(b)}
let mi='',ma='';const R=140;
for(let i=-R;i<=R;i++){if(!i)continue;const d=seg(i,-R,i,R)+seg(-R,i,R,i);if(i%10)mi+=d;else ma+=d}
$('floor').innerHTML=`<defs><linearGradient id="fa" x1="0" y1="0" x2="0" y2="1"><stop offset="0" stop-color="#222"/><stop offset=".08" stop-color="#555"/><stop offset=".25" stop-color="#aaa"/><stop offset=".5" stop-color="#fff"/></linearGradient>
<linearGradient id="fb" x1="0" y1="0" x2="0" y2="1"><stop offset="0" stop-color="#777"/><stop offset=".2" stop-color="#ccc"/><stop offset=".4" stop-color="#fff"/></linearGradient>
<mask id="ma" maskUnits="userSpaceOnUse" x="0" y="0" width="1584" height="884"><rect width="1584" height="884" fill="url(#fa)"/></mask><mask id="mb" maskUnits="userSpaceOnUse" x="0" y="0" width="1584" height="884"><rect width="1584" height="884" fill="url(#fb)"/></mask></defs>
<g mask="url(#ma)"><path d="${mi}" stroke="#4c4c4c" stroke-width="1.400" fill="none"/></g><g mask="url(#mb)"><path d="${ma}" stroke="#545454" stroke-width="1.400" fill="none"/></g>
<g mask="url(#mb)" fill="none" stroke-width="1.800"><path d="${seg(-R,0,R,0)}" stroke="#983c4a"/></g>
<path d="${seg(0,-R,0,-.33)}${seg(0,.33,0,R)}" fill="none" stroke="#628a28" stroke-width="1.800"/><path d="M${CX-6} ${CY+1}l12-2" stroke="#5f8528"/>
<g transform="translate(${CX} ${CY})" fill="none"><circle r="10" stroke="#fff" stroke-width="1.300"/><circle r="10" stroke="#e03030" stroke-width="1.300" stroke-dasharray="3.900 3.900"/><path d="M0-17v11M0 6v12" stroke="#000" stroke-width="1.200"/></g>`;
</script>
<script src="https://cdn.jsdelivr.net/npm/bootstrap@5.3.0/dist/js/bootstrap.bundle.min.js"></script>
</body>
</html>
